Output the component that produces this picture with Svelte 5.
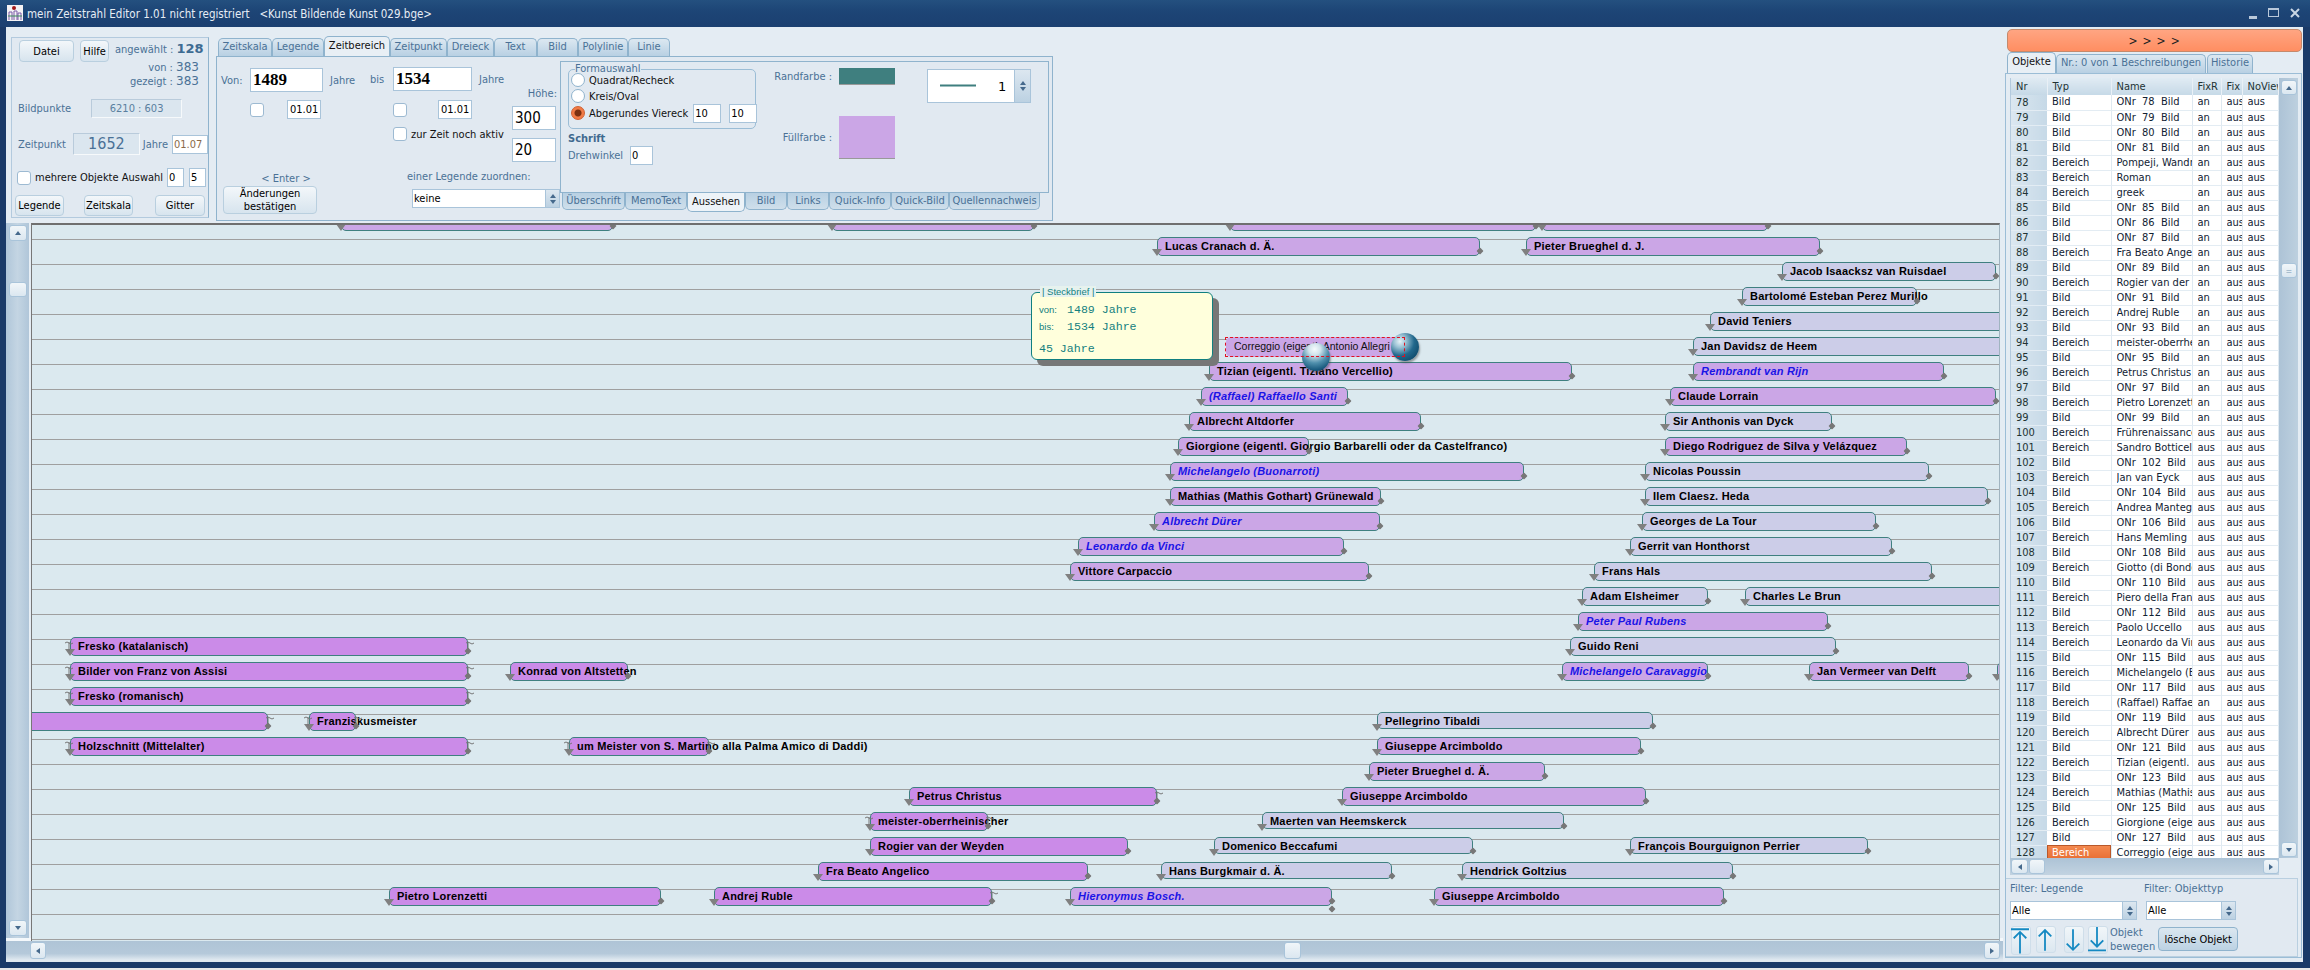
<script>
  const C_X = 31, C_Y = 223;
  // x1, x2, row top, colour, text, flags: i italic-blue, s squiggle both, r squiggle right, h height, x extra diamond
  const bars = [
    [341,613,212,'p',''],[832,1034,212,'p',''],[1230,1536,212,'p',''],[1542,1768,212,'p',''],
    [1157,1480,237,'p','Lucas Cranach d. Ä.'],[1526,1820,237,'p','Pieter Brueghel d. J.'],
    [1782,1996,262,'l','Jacob Isaacksz van Ruisdael'],
    [1742,1917,287,'l','Bartolomé Esteban Perez Murillo'],
    [1710,2100,312,'l','David Teniers'],
    [1693,2100,337,'l','Jan Davidsz de Heem'],
    [1209,1572,362,'p','Tizian (eigentl. Tiziano Vercellio)'],[1693,1944,362,'p','Rembrandt van Rijn','i'],
    [1201,1348,387,'p','(Raffael) Raffaello Santi','i'],[1670,1996,387,'p','Claude Lorrain'],
    [1189,1421,412,'p','Albrecht Altdorfer'],[1665,1832,412,'l','Sir Anthonis van Dyck'],
    [1178,1309,437,'p','Giorgione (eigentl. Giorgio Barbarelli oder da Castelfranco)'],[1665,1907,437,'p','Diego Rodriguez de Silva y Velázquez'],
    [1170,1524,462,'p','Michelangelo (Buonarroti)','i'],[1645,1929,462,'l','Nicolas Poussin'],
    [1170,1381,487,'p','Mathias (Mathis Gothart) Grünewald'],[1645,1988,487,'l','Ilem Claesz. Heda'],
    [1154,1380,512,'p','Albrecht Dürer','i'],[1642,1876,512,'l','Georges de La Tour'],
    [1078,1344,537,'p','Leonardo da Vinci','i'],[1630,1892,537,'l','Gerrit van Honthorst'],
    [1070,1369,562,'p','Vittore Carpaccio'],[1594,1932,562,'l','Frans Hals'],
    [1582,1708,587,'l','Adam Elsheimer'],[1745,2100,587,'l','Charles Le Brun'],
    [1578,1828,612,'p','Peter Paul Rubens','i'],
    [70,468,637,'b','Fresko (katalanisch)','s'],[1570,1836,637,'l','Guido Reni'],
    [70,468,662,'b','Bilder von Franz von Assisi','s'],[510,628,662,'b','Konrad von Altstetten'],
    [1562,1708,662,'p','Michelangelo Caravaggio','i'],[1809,1969,662,'p','Jan Vermeer van Delft'],[1997,2100,662,'p',''],
    [70,468,687,'b','Fresko (romanisch)','s'],
    [20,268,712,'b','','r'],[309,356,712,'b','Franziskusmeister','s'],[1377,1653,712,'l','Pellegrino Tibaldi','',17],
    [70,468,737,'b','Holzschnitt (Mittelalter)','s'],[569,709,737,'b','um Meister von S. Martino alla Palma Amico di Daddi)','s'],[1377,1641,737,'p','Giuseppe Arcimboldo','',18],
    [1369,1545,762,'p','Pieter Brueghel d. Ä.'],
    [909,1157,787,'b','Petrus Christus','r'],[1342,1646,787,'p','Giuseppe Arcimboldo'],
    [870,988,812,'b','meister-oberrheinischer','s'],[1262,1564,812,'l','Maerten van Heemskerck','',17],
    [870,1128,837,'b','Rogier van der Weyden'],[1214,1473,837,'l','Domenico Beccafumi','',17],[1630,1868,837,'l','François Bourguignon Perrier','',17],
    [818,1088,862,'b','Fra Beato Angelico'],[1161,1392,862,'l','Hans Burgkmair d. Ä.','',17],[1462,1733,862,'l','Hendrick Goltzius','',17],
    [389,661,887,'b','Pietro Lorenzetti'],[714,992,887,'b','Andrej Ruble','r'],[1070,1332,887,'p','Hieronymus Bosch.','ix'],[1434,1724,887,'p','Giuseppe Arcimboldo']
  ];

  const named = {
    82:'Pompeji, Wandmalerei',83:'Roman',84:'greek',88:'Fra Beato Angelico',90:'Rogier van der Weyden',92:'Andrej Ruble',
    94:'meister-oberrheinischer',96:'Petrus Christus',98:'Pietro Lorenzetti',100:'Frührenaissance',101:'Sandro Botticelli',
    103:'Jan van Eyck',105:'Andrea Mantegna',107:'Hans Memling',109:'Giotto (di Bondone)',111:'Piero della Francesca',
    113:'Paolo Uccello',114:'Leonardo da Vinci',116:'Michelangelo (Buonarroti)',118:'(Raffael) Raffaello',120:'Albrecht Dürer',
    122:'Tizian (eigentl. Tiziano)',124:'Mathias (Mathis Gothart)',126:'Giorgione (eigentl.)',128:'Correggio (eigentl.)'
  };
  const rows = [];
  for (let n = 78; n <= 128; n++) {
    const isB = !!named[n];
    rows.push({
      n,
      typ: isB ? 'Bereich' : 'Bild',
      name: isB ? named[n] : `ONr  ${n}  Bild`,
      fixr: n < 100 || n === 118 ? 'an' : 'aus'
    });
  }
  const topTabs = [['Zeitskala',54],['Legende',52],['Zeitbereich',66,true],['Zeitpunkt',57],['Dreieck',47],['Text',43],['Bild',41],['Polylinie',50],['Linie',42]];
  const subTabs = [['Überschrift',63],['MemoText',62],['Aussehen',58,true],['Bild',42],['Links',42],['Quick-Info',62],['Quick-Bild',58],['Quellennachweis',91]];
</script>

<div class="window">
  <header class="title">
    <svg class="appicon" viewBox="0 0 16 16"><rect width="16" height="16" fill="#f4f2f4"/><circle cx="7" cy="3" r="2" fill="#a01818"/><path d="M2 15V7h3v8M7 15V6h3v9M11 15V8h3v7" fill="none" stroke="#7a5aa8" stroke-width="1"/><path d="M1 11h14" stroke="#3a8a5a"/></svg>
    <span class="ttext">mein Zeitstrahl Editor 1.01 nicht registriert &nbsp;&nbsp;&lt;Kunst Bildende Kunst 029.bge&gt;</span>
    <div class="winbtns">
      <i class="wmin"></i><i class="wmax"></i>
      <svg class="wclose" viewBox="0 0 10 10"><path d="M1 1l8 8M9 1l-8 8" stroke="#c9d6e4" stroke-width="2"/></svg>
    </div>
  </header>

  <div class="body">
    <div class="leftcol">
      <div class="toolbar">
        <section class="lp">
          <div class="lprow1">
            <button class="btn datei">Datei</button>
            <button class="btn hilfe">Hilfe</button>
            <div class="info">
              <div class="ang">angewählt : <b>128</b></div>
              <div class="cnt von">von : <span>383</span></div>
              <div class="cnt">gezeigt : <span>383</span></div>
            </div>
          </div>
          <div class="lprow2"><span class="lbl">Bildpunkte</span><div class="ro bp">6210 : 603</div></div>
          <div class="lprow3"><span class="lbl">Zeitpunkt</span><div class="ro zp">1652</div><span class="lbl jl">Jahre</span><input class="inp zpd" value="01.07" readonly></div>
          <div class="lprow4"><span class="cb"></span><span class="mlabel">mehrere Objekte Auswahl</span><input class="inp n0" value="0" readonly><input class="inp n5" value="5" readonly></div>
          <div class="lprow5"><button class="btn b48">Legende</button><button class="btn b48">Zeitskala</button><button class="btn b49">Gitter</button></div>
        </section>

        <section class="mid">
          <nav class="tabs">
            {#each topTabs as t}
              <span class="tab" class:active={t[2]} style="width:{t[1]}px">{t[0]}</span>
            {/each}
          </nav>
          <div class="midpanel">
            <div class="formleft">
              <div class="colA">
                <div class="vonrow"><span class="lbl vl">Von:</span><input class="inp big b73" value="1489" readonly><span class="lbl jr">Jahre</span></div>
                <div class="daterow"><span class="cb"></span><input class="inp date" value="01.01" readonly></div>
                <div class="enter">&lt; Enter &gt;</div>
                <button class="btn confirm">Änderungen<br>bestätigen</button>
              </div>
              <div class="colBC">
                <div class="bctop">
                  <div class="colB">
                    <div class="bisrow"><span class="lbl bl">bis</span><input class="inp big b79" value="1534" readonly><span class="lbl jr2">Jahre</span></div>
                    <div class="daterow d2"><span class="cb"></span><input class="inp date" value="01.01" readonly></div>
                    <div class="aktiv"><span class="cb"></span><span class="blk">zur Zeit noch aktiv</span></div>
                  </div>
                  <div class="colC">
                    <div class="lbl hoehe">Höhe:</div>
                    <input class="inp hnum" value="300" readonly>
                    <input class="inp hnum second" value="20" readonly>
                  </div>
                </div>
                <div class="lbl zuord">einer Legende zuordnen:</div>
                <div class="select s148"><span>keine</span><i class="spin"><u></u><s></s></i></div>
              </div>
            </div>

            <div class="sub">
              <div class="subpanel">
                <div class="subleft">
                  <fieldset class="group">
                    <legend>Formauswahl</legend>
                    <div class="radio"><span class="rd"></span><span class="blk">Quadrat/Recheck</span></div>
                    <div class="radio r2"><span class="rd"></span><span class="blk">Kreis/Oval</span></div>
                    <div class="radio r3"><span class="rd on"></span><span class="blk">Abgerundes Viereck</span><input class="inp rad" value="10" readonly><input class="inp rad" value="10" readonly></div>
                  </fieldset>
                  <div class="schrift">Schrift</div>
                  <div class="dreh"><span class="lbl">Drehwinkel</span><input class="inp dw" value="0" readonly></div>
                </div>
                <div class="colors">
                  <div class="colorrow"><span class="lbl cl">Randfarbe :</span><span class="sw rand"></span></div>
                  <div class="colorrow f"><span class="lbl cl">Füllfarbe :</span><span class="sw full"></span></div>
                </div>
                <div class="linew">
                  <svg class="lw" viewBox="0 0 36 4"><rect y="0.5" width="36" height="2" fill="#3f7f7f"/></svg>
                  <span class="lwn">1</span>
                  <i class="spin tall"><u></u><s></s></i>
                </div>
              </div>
              <nav class="subtabs">
                {#each subTabs as t}
                  <span class="stab" class:active={t[2]} style="width:{t[1]}px">{t[0]}</span>
                {/each}
              </nav>
            </div>
          </div>
        </section>
      </div>

      <div class="work">
        <div class="vscroll">
          <span class="sb up"><em class="tri-u"></em></span>
          <span class="sb vthumb"></span>
          <span class="sb down"><em class="tri-d"></em></span>
        </div>
        <main class="canvas">
          {#each bars as b}
            <div class="bar {b[3]}" class:it={b[5]?.includes('i')}
              style="left:{b[0]-C_X}px;top:{b[2]-C_Y}px;width:{b[1]-b[0]}px;height:{b[6] || 19}px">
              {#if b[4]}<span class="txt">{b[4]}</span>{/if}
              <i class="tl"></i><i class="dm"></i>
              {#if b[5]?.includes('x')}<i class="dm extra"></i>{/if}
              {#if b[5]?.includes('s')}
                <svg class="sq sl" viewBox="0 0 8 12"><path d="M0 3q2-2 4 0t4 0M4 2v9" fill="none" stroke="#777" stroke-width="1"/></svg>
              {/if}
              {#if b[5]?.includes('s') || b[5]?.includes('r')}
                <svg class="sq sr" viewBox="0 0 8 12"><path d="M0 3q2-2 4 0t4 0M2 2v9" fill="none" stroke="#777" stroke-width="1"/></svg>
              {/if}
            </div>
          {/each}

          <div class="correggio"><span>Correggio (eigentl. Antonio Allegri</span></div>
          <i class="sphere s1"></i><i class="sphere s2"></i>
          <div class="selrect"></div>

          <aside class="steck">
            <div class="stitle">| Steckbrief |</div>
            <div class="sline l1"><span class="sk">von:</span><span class="sv">1489 Jahre</span></div>
            <div class="sline"><span class="sk">bis:</span><span class="sv">1534 Jahre</span></div>
            <div class="sdur">45 Jahre</div>
          </aside>
        </main>
      </div>
      <div class="hscroll">
        <span class="sb hl"><em class="tri-l"></em></span>
        <span class="sb hthumb"></span>
        <span class="sb hr"><em class="tri-r"></em></span>
      </div>
    </div>

    <aside class="rightcol">
      <button class="orange">&gt; &gt; &gt; &gt;</button>
      <nav class="rtabs">
        <span class="tab active w49">Objekte</span>
        <span class="tab w150">Nr.: 0 von 1 Beschreibungen</span>
        <span class="tab w46">Historie</span>
      </nav>
      <div class="rpanel">
        <div class="tablewrap">
          <div class="tablecol">
            <div class="tableclip">
              <table>
                <colgroup><col class="c1"><col class="c2"><col class="c3"><col class="c4"><col class="c5"><col class="c6"></colgroup>
                <thead><tr><th>Nr</th><th>Typ</th><th>Name</th><th><div>FixR</div></th><th><div>Fix</div></th><th><div>NoView</div></th></tr></thead>
                <tbody>
                  {#each rows as r}
                    <tr>
                      <th>{r.n}</th>
                      <td class:seltd={r.n === 128}><div>{r.typ}</div></td>
                      <td><div>{r.name}</div></td>
                      <td><div>{r.fixr}</div></td>
                      <td><div>aus</div></td>
                      <td><div>aus</div></td>
                    </tr>
                  {/each}
                </tbody>
              </table>
            </div>
            <div class="thscroll">
              <span class="sb tl2"><em class="tri-l"></em></span>
              <span class="sb tth"></span>
              <span class="sb tr2"><em class="tri-r"></em></span>
            </div>
          </div>
          <div class="tvscroll">
            <span class="sb tup"><em class="tri-u"></em></span>
            <span class="sb tthumb">=</span>
            <span class="sb tdown"><em class="tri-d"></em></span>
          </div>
        </div>
        <div class="filters">
          <div class="frow">
            <div class="fcol f1"><span class="lbl">Filter: Legende</span><div class="select s127"><span>Alle</span><i class="spin"><u></u><s></s></i></div></div>
            <div class="fcol f2"><span class="lbl">Filter: Objekttyp</span><div class="select s90"><span>Alle</span><i class="spin"><u></u><s></s></i></div></div>
          </div>
          <div class="moverow">
            <button class="arrow"><svg viewBox="0 0 20 29"><path d="M0 2h20M10 29V5M3 12l7-7 7 7" fill="none" stroke="#1589c2" stroke-width="2"/></svg></button>
            <button class="arrow a2"><svg viewBox="0 0 20 27"><path d="M10 26V3M3 10l7-7 7 7" fill="none" stroke="#1589c2" stroke-width="2"/></svg></button>
            <button class="arrow a3"><svg viewBox="0 0 20 27"><path d="M10 2v23M3 18l7 7 7-7" fill="none" stroke="#1589c2" stroke-width="2"/></svg></button>
            <button class="arrow a4"><svg viewBox="0 0 20 29"><path d="M10 0v21M3 15l7 7 7-7M0 26h20" fill="none" stroke="#1589c2" stroke-width="2"/></svg></button>
            <span class="lbl obj">Objekt<br>bewegen</span>
            <button class="btn loesche">lösche Objekt</button>
          </div>
        </div>
      </div>
    </aside>
  </div>
  <div class="bottomstrip"></div>
</div>

<style>
  :global(body) { margin: 0; background: #1b3b6b; }
  * { box-sizing: border-box; }
  .window {
    width: 2310px; height: 970px; display: flex; flex-direction: column; overflow: hidden;
    background: #1a3a68;
    font: 11px "DejaVu Sans Condensed", "Noto Sans", sans-serif; color: #000;
  }
  .title {
    height: 27px; flex: none; display: flex; align-items: center; padding: 0 10px 0 7px;
    background: linear-gradient(#24507f, #1d4576 40%, #1b3f70);
  }
  .appicon { width: 16px; height: 16px; margin-top: -1px; }
  .ttext { margin-left: 4px; color: #e6edf5; font-size: 11.5px; white-space: pre; }
  .winbtns { margin-left: auto; display: flex; align-items: center; gap: 11px; margin-top: -2px; }
  .wmin { width: 8px; height: 3px; background: #b9c8da; margin-top: 9px; }
  .wmax { width: 11px; height: 9px; border: 1px solid #b9c8da; border-top-width: 2px; }
  .wclose { width: 10px; height: 10px; }

  .body { flex: 1; min-height: 0; display: flex; margin: 0 7px 0 6px; background: #e4ecf3; }
  .leftcol { width: 1997px; display: flex; flex-direction: column; }
  .toolbar { height: 194px; flex: none; display: flex; padding: 10px 0 0 5px; gap: 7px; }

  .lbl { color: #4a7196; white-space: nowrap; }
  .blk { color: #111; white-space: nowrap; }

  .btn {
    font: inherit; color: #000; padding: 0; line-height: 13px;
    background: linear-gradient(#f3f7fa, #d7e4ee);
    border: 1px solid #b9cfdf; border-radius: 4px;
  }
  .inp {
    font: inherit; color: #000; border: 1px solid #a9c4da; background: #fff; padding: 0 0 0 1px;
    outline: none; border-radius: 0; display: block; flex: none; height: 19px; width: 30px;
  }
  .cb { width: 14px; height: 14px; flex: none; border: 1px solid #9dbad2; border-radius: 3px; background: #fff; display: block; }
  .ro { border: 1px solid #b9cbdb; border-right-color: #f6f9fb; border-bottom-color: #f6f9fb; background: #dbe6ef; color: #5a7f9f; text-align: center; }

  .lp { width: 198px; height: 181px; flex: none; border: 1px solid #b3cade; border-right-color: #8fb3cd; background: #e1e9f1; padding: 2px 0 0 2px; display: flex; flex-direction: column; }
  .lprow1 { display: flex; height: 50px; padding-left: 5px; }
  .datei { width: 55px; height: 22px; }
  .hilfe { width: 29px; height: 22px; margin-left: 6px; }
  .info { margin-left: 6px; width: 89px; display: flex; flex-direction: column; align-items: stretch; }
  .ang { color: #4a7196; white-space: nowrap; line-height: 20px; }
  .ang b { font: bold 13px "DejaVu Sans", sans-serif; color: #3d6b92; }
  .cnt { text-align: right; color: #4a7196; line-height: 12px; padding-right: 5px; }
  .cnt span { font: 12px "DejaVu Sans", sans-serif; color: #4a7196; }
  .von { margin-top: 0; }
  .lprow2 { display: flex; align-items: center; height: 19px; margin-top: 9px; padding-left: 4px; }
  .bp { width: 91px; height: 19px; line-height: 17px; margin-left: 20px; }
  .lprow3 { display: flex; align-items: center; height: 22px; margin-top: 15px; padding-left: 4px; }
  .zp { width: 69px; height: 22px; line-height: 20px; font: 16px/20px "DejaVu Sans Condensed", sans-serif; margin-left: 7px; color: #4a7196; }
  .jl { margin-left: 3px; }
  .zpd { width: 36px; margin-left: 4px; color: #8a6a4a; }
  .lprow4 { display: flex; align-items: center; height: 19px; margin-top: 13px; padding-left: 3px; }
  .mlabel { margin-left: 4px; color: #111; white-space: nowrap; width: 128px; }
  .n0 { width: 17px; margin-left: 4px; }
  .n5 { width: 17px; margin-left: 5px; }
  .lprow5 { display: flex; height: 21px; margin-top: 8px; padding-left: 1px; gap: 20px; }
  .b48 { width: 49px; height: 21px; }
  .b49 { width: 50px; height: 21px; margin-left: 2px; }

  .mid { width: 837px; flex: none; display: flex; flex-direction: column; margin-top: -1px; }
  .tabs { display: flex; height: 20px; align-items: flex-end; padding-left: 2px; }
  .tab {
    height: 18px; line-height: 16px; text-align: center; color: #4a7196; white-space: nowrap;
    background: linear-gradient(#dce8f1, #b8d0e3);
    border: 1px solid #8fb3cd; border-bottom: 0; border-radius: 5px 5px 0 0; flex: none; margin-right: 0;
  }
  .tab.active { height: 20px; line-height: 17px; background: #e8eff5; color: #111; }
  .midpanel { flex: 1; border: 1px solid #8fb3cd; border-top-color: #8fb3cd; display: flex; background: #e1e9f1; }
  .formleft { width: 343px; flex: none; display: flex; }
  .colA { width: 153px; flex: none; display: flex; flex-direction: column; padding-left: 4px; }
  .vonrow { display: flex; align-items: center; height: 24px; margin-top: 11px; }
  .vl { width: 29px; }
  .big { font: bold 17px "Liberation Serif", serif; padding-left: 2px; height: 24px; }
  .b73 { width: 73px; }
  .jr { margin-left: 7px; }
  .daterow { display: flex; align-items: center; height: 19px; margin-top: 8px; padding-left: 29px; }
  .date { width: 34px; margin-left: 23px; font-size: 11px; padding-left: 2px; }
  .enter { color: #4a7196; text-align: center; margin-top: 53px; padding-right: 19px; line-height: 13px; }
  .confirm { width: 94px; height: 28px; margin: 1px 0 0 2px; }
  .colBC { flex: 1; display: flex; flex-direction: column; }
  .bctop { display: flex; height: 112px; }
  .colB { width: 142px; flex: none; }
  .bisrow { display: flex; align-items: center; height: 24px; margin-top: 10px; }
  .bl { width: 23px; }
  .b79 { width: 79px; }
  .jr2 { margin-left: 7px; }
  .d2 { padding-left: 23px; margin-top: 9px; }
  .d2 .date { margin-left: 31px; }
  .aktiv { display: flex; align-items: center; gap: 4px; padding-left: 23px; margin-top: 8px; height: 14px; }
  .colC { flex: none; display: flex; flex-direction: column; }
  .hoehe { width: 45px; text-align: right; margin-top: 30px; line-height: 13px; height: 19px; }
  .hnum { width: 44px; height: 24px; font-size: 15px; padding-left: 2px; font-family: "DejaVu Sans Condensed", sans-serif; }
  .second { margin-top: 8px; }
  .zuord { padding-left: 37px; margin-top: 1px; line-height: 13px; }
  .select { display: flex; align-items: center; border: 1px solid #a9c4da; background: #fff; height: 19px; padding-left: 1px; position: relative; }
  .select span { flex: 1; }
  .s148 { width: 148px; margin: 6px 0 0 42px; }
  .spin { display: flex; flex-direction: column; align-items: center; justify-content: center; gap: 2px; width: 14px; align-self: stretch; background: linear-gradient(#dce7f0, #bcd1e2); border-left: 1px solid #a9c4da; }
  .spin.tall { width: 16px; margin-left: auto; }
  .spin u { display: block; border: 3.5px solid transparent; border-top: 0; border-bottom: 4px solid #45698c; }
  .spin s { display: block; border: 3.5px solid transparent; border-bottom: 0; border-top: 4px solid #45698c; }

  .sub { width: 489px; flex: none; display: flex; flex-direction: column; margin-left: 0; padding-top: 4px; }
  .subpanel { height: 132px; border: 1px solid #8fb3cd; display: flex; padding-left: 7px; }
  .subleft { width: 199px; flex: none; display: flex; flex-direction: column; }
  .group { margin: 7px 0 0; padding: 0; border: 1px solid #9bbdd6; border-radius: 5px; width: 188px; height: 60px; min-width: 0; position: relative; }
  .group legend { position: absolute; top: -7px; left: 6px; background: #e1e9f1; color: #4a7196; line-height: 12px; padding: 0; }
  .radio { display: flex; align-items: center; height: 14px; position: absolute; left: 2px; right: 0; top: 3px; gap: 4px; }
  .r2 { top: 19px; }
  .r3 { top: 36px; }
  .rd { width: 14px; height: 14px; border-radius: 50%; border: 1px solid #8fb3cd; background: #fff; flex: none; display: block; }
  .rd.on { background: radial-gradient(circle, #7a3010 0 3px, #f07a45 4px); border-color: #d06030; }
  .rad { width: 28px; height: 19px; }
  .r3 .rad:first-of-type { margin-left: 1px; }
  .r3 .rad:last-of-type { margin-left: 4px; }
  .schrift { font-weight: bold; color: #3f6a8f; margin-top: 3px; line-height: 13px; }
  .dreh { display: flex; align-items: center; margin-top: 1px; gap: 7px; height: 19px; }
  .dw { width: 23px; }
  .colors { width: 136px; flex: none; }
  .colorrow { display: flex; align-items: center; gap: 7px; margin-top: 6px; }
  .colorrow.f { margin-top: 31px; }
  .cl { width: 65px; text-align: right; }
  .sw { width: 56px; display: block; flex: none; border-bottom: 1px solid #999; }
  .rand { height: 17px; background: #3f7f7f; }
  .full { height: 43px; background: #cba6e6; }
  .linew { margin: 7px 0 0 24px; width: 104px; height: 34px; border: 1px solid #a9c4da; background: #fff; display: flex; align-items: center; padding-left: 12px; }
  .lw { width: 36px; height: 4px; }
  .lwn { margin-left: 22px; font: 13px "DejaVu Sans", sans-serif; }

  .subtabs { display: flex; height: 18px; padding-left: 2px; gap: 0; }
  .stab {
    height: 17px; line-height: 15px; text-align: center; color: #4a7196; white-space: nowrap; flex: none;
    background: linear-gradient(#b8d0e3, #cfdfeb);
    border: 1px solid #8fb3cd; border-top: 0; border-radius: 0 0 5px 5px;
  }
  .stab.active { height: 19px; line-height: 18px; background: #edf3f8; color: #111; }

  .work { flex: 1; min-height: 0; display: flex; margin-top: 2px; }
  .vscroll { width: 24px; flex: none; padding: 2px 1px 2px 3px; display: flex; flex-direction: column; background: linear-gradient(90deg, #b0c6d9, #c4d5e3 50%, #b0c6d9); border-right: 1px solid #e8eff5; }
  .sb { display: flex; align-items: center; justify-content: center; flex: none; background: linear-gradient(#f1f6f9, #dbe7f0); border: 1px solid #a9c4da; border-radius: 3px; color: #7a9ab5; line-height: 10px; }
  .up, .down { height: 16px; width: 18px; }
  .vthumb { height: 15px; width: 18px; margin-top: 41px; }
  .down { margin-top: auto; }
  em { display: block; }
  .tri-u { border: 3.5px solid transparent; border-top: 0; border-bottom: 4px solid #45698c; }
  .tri-d { border: 3.5px solid transparent; border-bottom: 0; border-top: 4px solid #45698c; }
  .tri-l { border: 3.5px solid transparent; border-left: 0; border-right: 4px solid #45698c; }
  .tri-r { border: 3.5px solid transparent; border-right: 0; border-left: 4px solid #45698c; }

  .canvas {
    width: 1969px; flex: none; position: relative; overflow: hidden;
    border-top: 2px solid #6f6f6f; border-left: 1px solid #777; border-right: 1px solid #a0b4c0;
    margin-top: 0;
    background-color: #dbe9ef;
    background-image: linear-gradient(to bottom, transparent 24px, #9f9f9f 24px);
    background-size: 100% 25px;
    background-position: 0 -10px;
    height: 718px;
    margin-left: 1px;
  }
  .bar { position: absolute; margin-top: -2px; margin-left: -1px; border: 1px solid #3f8080; border-radius: 5px; white-space: nowrap; }
  .bar.p { background: #cba6e6; }
  .bar.b { background: #cb8be8; }
  .bar.l { background: #cccde8; }
  .txt { position: absolute; left: 7px; top: 2px; font: bold 11px/13px "Liberation Sans", Arial, sans-serif; letter-spacing: .2px; color: #000; z-index: 1; }
  .it .txt { color: #1a14e6; font-style: italic; }
  .tl { position: absolute; left: -6px; top: 11px; border: 5.5px solid transparent; border-bottom: 0; border-top: 7px solid #808080; z-index: 2; }
  .dm { position: absolute; right: -4px; top: 10px; width: 6px; height: 6px; background: #777; transform: rotate(45deg) scale(.85); border-radius: 1px; z-index: 2; }
  .dm.extra { top: 18px; }
  .sq { position: absolute; width: 8px; height: 12px; top: 2px; z-index: 2; }
  .sl { left: -6px; }
  .sr { right: -7px; }

  .correggio {
    position: absolute; left: 1194px; top: 112px; width: 179px; height: 20px;
    background: #cba6e6; border-radius: 5px; overflow: hidden; white-space: nowrap;
    font: 10.5px/18px "Liberation Sans", sans-serif; padding-left: 8px; color: #111;
  }
  .selrect { position: absolute; left: 1193px; top: 112px; width: 180px; height: 20px; border: 1px dashed #e01020; border-radius: 1px; z-index: 4; }
  .sphere { position: absolute; width: 28px; height: 28px; border-radius: 50%; z-index: 3; box-shadow: 1px 2px 2px rgba(60,60,60,.45); }
  .s1 { left: 1270px; top: 118px; background: radial-gradient(circle at 45% 22%, #f6fbfd 0, #d2e4ec 22%, #4f8fac 52%, #17587c 78%, #0d4262 100%); }
  .s2 { left: 1359px; top: 108px; background: radial-gradient(circle at 32% 30%, #e8f3f7 0, #9cc3d5 22%, #23698d 52%, #0d4666 85%); }
  .steck {
    position: absolute; left: 999px; top: 67px; width: 182px; height: 68px; z-index: 5;
    background: #ffffdc; border: 1px solid #0f7f80; border-radius: 6px; box-shadow: 6px 6px 0 #777;
    color: #138080; padding: 0 0 0 7px;
  }
  .stitle { position: absolute; left: 8px; top: -7px; background: #e6f2ee; font: 9.5px/11px "Liberation Sans", sans-serif; padding: 0 2px; }
  .sline { display: flex; align-items: center; height: 17px; }
  .l1 { margin-top: 8px; }
  .sk { width: 28px; font: 9.5px "Liberation Sans", sans-serif; }
  .sv, .sdur { font: 11.6px "Liberation Mono", monospace; white-space: pre; }
  .sdur { margin-top: 7px; }

  .hscroll { height: 24px; flex: none; display: flex; align-items: center; padding: 0 3px 2px 24px; margin-top: 0; border-top: 3px solid #f4f8fb; background: linear-gradient(#afc4d6, #b5c9da 60%, #e0e9f0 90%); }
  .hl { width: 16px; height: 17px; }
  .hthumb { width: 17px; height: 17px; margin-left: 1238px; }
  .hr { width: 16px; height: 17px; margin-left: auto; }

  .rightcol { width: 300px; flex: none; display: flex; flex-direction: column; padding: 2px 1px 0 2px; background: #e4ecf3; }
  .orange { height: 23px; margin-left: 2px; width: 295px; background: linear-gradient(#ffa582, #ff8e62); border: 1px solid #c5896b; border-radius: 5px; color: #222; font: 12px/1 "DejaVu Sans Condensed", sans-serif; letter-spacing: .8px; padding: 0; }
  .rtabs { display: flex; height: 21px; align-items: flex-end; padding-left: 2px; }
  .rtabs .tab { height: 19px; }
  .rtabs .tab.active { height: 21px; }
  .w49 { width: 49px; }
  .w150 { width: 150px; }
  .w46 { width: 46px; margin-left: 1px; }
  .rpanel { width: 297px; height: 885px; border: 1px solid #9bbdd6; flex: none; display: flex; flex-direction: column; padding: 4px 0 0; }
  .tablewrap { display: flex; height: 799px; flex: none; padding-left: 4px; }
  .tablecol { width: 269px; flex: none; display: flex; flex-direction: column; }
  .tableclip { height: 780px; overflow: hidden; border-left: 1px solid #b3cade; flex: none; }
  table { width: 267px; table-layout: fixed; border-collapse: collapse; }
  .c1 { width: 36px; } .c2 { width: 64px; } .c3 { width: 81px; } .c4 { width: 29px; } .c5 { width: 21px; } .c6 { width: 36px; }
  thead th { height: 17px; padding: 0 0 0 5px; background: linear-gradient(#e0ebf3, #c6d9e7); font-weight: normal; text-align: left; border-right: 1px solid #e9f0f6; color: #233; overflow: hidden; white-space: nowrap; }
  thead th div { overflow: hidden; }
  tbody th { height: 15px; padding: 0 0 0 5px; background: linear-gradient(90deg, #dbe7f0, #c6d9e7); font-weight: normal; text-align: left; border-bottom: 1px solid #e3ecf3; color: #233; }
  tbody td { height: 15px; padding: 0 0 0 5px; background: #fff; border-right: 1px solid #dfe9f1; border-bottom: 1px solid #e3ecf3; color: #123; overflow: hidden; white-space: pre; }
  tbody td div { overflow: hidden; height: 14px; line-height: 14px; }
  .seltd { background: linear-gradient(#f48a50, #e76e33); color: #fff; outline: 1px solid #b9582a; outline-offset: -1px; }
  .thscroll { height: 17px; flex: none; display: flex; align-items: center; padding-left: 1px; background: linear-gradient(#adc3d6, #c2d3e1); }
  .tl2 { width: 17px; height: 15px; }
  .tth { width: 16px; height: 15px; margin-left: 1px; }
  .tr2 { width: 16px; height: 15px; margin-left: auto; }
  .tvscroll { width: 19px; flex: none; height: 780px; padding: 2px 1px 0 2px; display: flex; flex-direction: column; background: linear-gradient(90deg, #adc3d6, #bdd0df); }
  .tup, .tthumb, .tdown { width: 16px; height: 15px; }
  .tthumb { margin-top: 168px; font-size: 9px; }
  .tdown { margin-top: auto; margin-bottom: 1px; }
  .filters { flex: 1; border-top: 1px solid #b9cfe0; padding: 3px 0 0 4px; display: flex; flex-direction: column; background: #e1e9f1; margin-top: 1px; margin-right: 3px; border-right: 1px solid #b9cfe0; border-bottom: 1px solid #b9cfe0; }
  .frow { display: flex; }
  .fcol { display: flex; flex-direction: column; gap: 6px; }
  .fcol .lbl { line-height: 13px; }
  .f2 { margin-left: 9px; }
  .fcol.f2 .lbl { margin-left: -2px; }
  .s127 { width: 127px; }
  .s90 { width: 90px; }
  .moverow { display: flex; align-items: flex-start; margin-top: 6px; padding-left: 1px; }
  .arrow { width: 20px; height: 29px; padding: 0; background: linear-gradient(#f1f6f9, #dbe7f0); border: 1px solid #cfdeea; border-radius: 3px; flex: none; display: block; }
  .arrow svg { display: block; width: 100%; height: 100%; margin-left: -1px; overflow: visible; }
  .a2 { margin-left: 5px; height: 27px; }
  .a3 { margin-left: 8px; height: 27px; }
  .a4 { margin-left: 4px; height: 28px; }
  .obj { margin-left: 2px; line-height: 14px; }
  .loesche { width: 80px; height: 24px; margin: 1px 0 0 3px; background: linear-gradient(#dbe7f0, #bcd2e3); border-color: #8fb3cd; }

  .bottomstrip { height: 8px; flex: none; border-bottom: 2px solid #e8e8e8; background: #1a3a68; }
</style>
